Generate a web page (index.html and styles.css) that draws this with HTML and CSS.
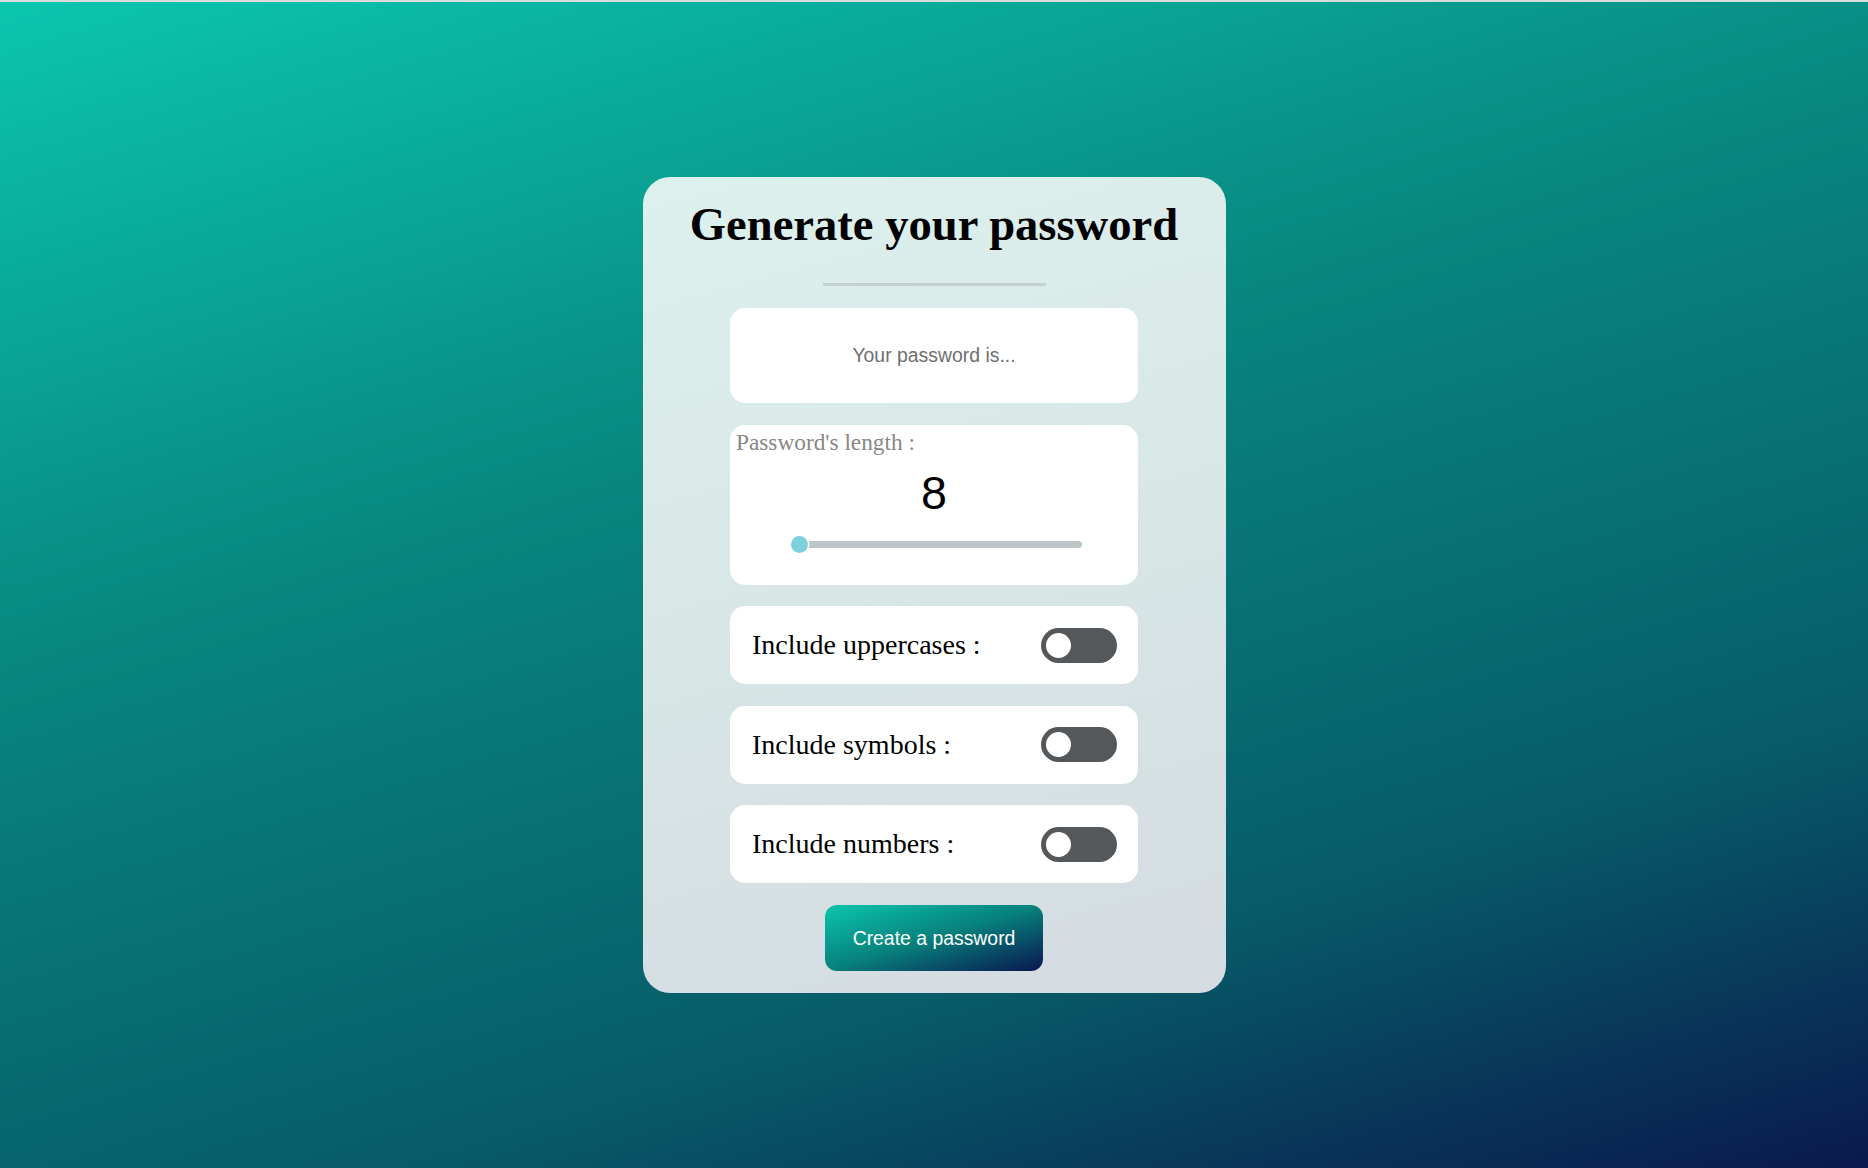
FILE: index.html
```html
<!DOCTYPE html>
<html lang="en">
<head>
<meta charset="utf-8">
<title>Password generator</title>
<link rel="stylesheet" href="styles.css">
</head>
<body>
<main class="card">
  <h1 class="title">Generate your password</h1>
  <div class="divider"></div>
  <div class="panel output">Your password is...</div>
  <div class="panel length">
    <div class="length-label">Password's length :</div>
    <div class="length-value">8</div>
    <div class="slider">
      <div class="track"></div>
      <div class="thumb"></div>
    </div>
  </div>
  <div class="panel option">
    <span class="option-label">Include uppercases :</span>
    <span class="toggle"><span class="knob"></span></span>
  </div>
  <div class="panel option">
    <span class="option-label">Include symbols :</span>
    <span class="toggle"><span class="knob"></span></span>
  </div>
  <div class="panel option">
    <span class="option-label">Include numbers :</span>
    <span class="toggle"><span class="knob"></span></span>
  </div>
  <button class="create" type="button">Create a password</button>
</main>
</body>
</html>
```

FILE: styles.css
```css
* {
  box-sizing: border-box;
}

html, body {
  margin: 0;
  padding: 0;
}

body {
  height: 100vh;
  border-top: 2px solid #d9dcdb;
  background: linear-gradient(163deg, #0bc6ae 0%, #08877f 38%, #075c68 74%, #0a184e 100%);
  display: flex;
  align-items: center;
  justify-content: center;
  font-family: "Liberation Serif", "Times New Roman", serif;
}

.card {
  width: 583px;
  padding: 21.5px 0 21.6px;
  border-radius: 27px;
  background: linear-gradient(165deg, #dcf1ee 0%, #d8e6e6 50%, #d4dbe1 100%);
  display: flex;
  flex-direction: column;
  align-items: center;
}

.title {
  margin: 0;
  font-family: "Liberation Serif", "Times New Roman", serif;
  font-weight: 700;
  font-size: 46.6px;
  line-height: 51.6px;
  color: #000;
  text-align: center;
}

.divider {
  margin-top: 33px;
  width: 223px;
  height: 3px;
  background: #c3d1d1;
}

.panel {
  margin-top: 21.6px;
  width: 408px;
  background: #fff;
  border-radius: 15px;
}

.output {
  height: 95px;
  display: flex;
  align-items: center;
  justify-content: center;
  font-family: "Liberation Sans", Arial, sans-serif;
  font-size: 19.4px;
  color: #6f6f6f;
}

.length {
  height: 160px;
  padding: 4px 6px 0;
  display: flex;
  flex-direction: column;
}

.length-label {
  font-size: 23.3px;
  line-height: 27px;
  color: #878787;
}

.length-value {
  margin-top: 11px;
  text-align: center;
  font-family: "Liberation Sans", Arial, sans-serif;
  font-size: 46.6px;
  line-height: 53px;
  color: #000;
}

.slider {
  position: relative;
  margin: 16px auto 0;
  width: 292px;
  height: 17px;
  display: flex;
  align-items: center;
  left: 2px;
}

.track {
  margin-left: 6px;
  width: 286px;
  height: 7px;
  border-radius: 4px;
  background: #bec5c9;
}

.thumb {
  position: absolute;
  left: 1px;
  top: 0;
  width: 17px;
  height: 17px;
  border-radius: 50%;
  background: #7fd0de;
  box-shadow: 0 0 0 1.5px #fff;
}

.option {
  height: 78px;
  padding: 0 21px 0 22px;
  display: flex;
  align-items: center;
  justify-content: space-between;
}

.option-label {
  font-size: 28px;
  color: #000;
}

.toggle {
  width: 76px;
  height: 35px;
  border-radius: 18px;
  background: #54585b;
  display: flex;
  align-items: center;
  padding-left: 5px;
}

.knob {
  width: 25px;
  height: 25px;
  border-radius: 50%;
  background: #fff;
}

.create {
  margin-top: 21.6px;
  width: 218px;
  height: 66px;
  border: none;
  border-radius: 12px;
  background: linear-gradient(to bottom right, #0bc6ae 0%, #07807b 50%, #0a1650 100%);
  color: #fff;
  font-family: "Liberation Sans", Arial, sans-serif;
  font-size: 19.4px;
  padding: 0;
}
```
